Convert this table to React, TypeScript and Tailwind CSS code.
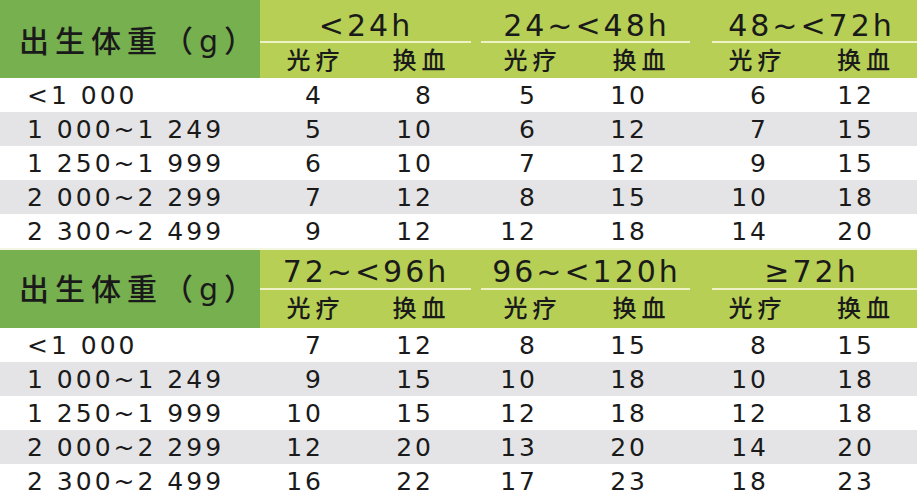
import React from "react";

const font = {
  fontFamily: '"DejaVu Sans", "Noto Sans CJK SC", sans-serif',
};

// right padding for each value column so digits line up on the right
const valuePad = ["pr-[42px]", "pr-[38px]", "pr-[50px]", "pr-[42px]", "pr-[51px]", "pr-[42px]"];
const subPad = ["pl-[5px]", "pl-[5px]", "pl-[5px]", "pl-[5px]", "pl-[5px]", "pl-[5px] pr-[10px]"];

const weights = ["<1 000", "1 000~1 249", "1 250~1 999", "2 000~2 299", "2 300~2 499"];

const tables = [
  {
    groups: ["<24h", "24~<48h", "48~<72h"],
    rows: [
      [4, 8, 5, 10, 6, 12],
      [5, 10, 6, 12, 7, 15],
      [6, 10, 7, 12, 9, 15],
      [7, 12, 8, 15, 10, 18],
      [9, 12, 12, 18, 14, 20],
    ],
    titleH: "h-[41px] pb-0",
    subH: "h-[35px]",
    labelPad: "pt-[5px]",
  },
  {
    groups: ["72~<96h", "96~<120h", "\u226572h"],
    rows: [
      [7, 12, 8, 15, 8, 15],
      [9, 15, 10, 18, 10, 18],
      [10, 15, 12, 18, 12, 18],
      [12, 20, 13, 20, 14, 20],
      [16, 22, 17, 23, 18, 23],
    ],
    titleH: "h-[38px] pb-[1px]",
    subH: "h-[38px]",
    labelPad: "pt-[2px]",
  },
];

// per group: title offset and underline margins
const groupStyle = [
  { title: "pl-[0px]", line: "mr-[1px]" },
  { title: "pl-[11px]", line: "ml-[9px] -mr-[1px]" },
  { title: "pl-[16px]", line: "ml-[22px]" },
];

function Table({ t }: { t: (typeof tables)[number] }) {
  return (
    <div className="grid grid-cols-[260px_106px_106px_116px_102px_130px_97px] text-[#1a1a1a] font-medium">
      {/* header */}
      <div
        className={`row-span-3 bg-[#77b04f] flex items-center pl-[19px] text-[30px] tracking-[6px] leading-none ${t.labelPad}`}
      >
        出生体重（g）
      </div>
      {t.groups.map((g, i) => (
        <div key={g} className="col-span-2 bg-[#b7cf55] flex flex-col">
          <div
            className={`${t.titleH} flex items-end justify-center text-[30px] tracking-[3px] leading-none ${groupStyle[i].title}`}
          >
            {g}
          </div>
        </div>
      ))}
      {t.groups.map((g, i) => (
        <div key={g + "l"} className="col-span-2 bg-[#b7cf55] h-[2px]">
          <div className={`h-[2px] bg-[#eef2c6] ${groupStyle[i].line}`} />
        </div>
      ))}
      {[0, 1, 2, 3, 4, 5].map((c) => (
        <div
          key={c}
          className={`${t.subH} bg-[#b7cf55] flex items-center justify-center text-[24px] tracking-[5px] leading-none ${subPad[c]}`}
        >
          {c % 2 === 0 ? "光疗" : "换血"}
        </div>
      ))}

      {/* body */}
      {t.rows.map((r, ri) => {
        const bg = ri % 2 === 1 ? "bg-[#e4e4e6]" : "bg-white";
        return (
          <React.Fragment key={ri}>
            <div
              className={`h-[34px] ${bg} flex items-center pl-[27px] text-[25px] tracking-[3px] leading-none`}
            >
              {weights[ri]}
            </div>
            {r.map((v, ci) => (
              <div
                key={ci}
                className={`h-[34px] ${bg} flex items-center justify-end text-[25px] tracking-[3px] leading-none ${valuePad[ci]}`}
              >
                {v}
              </div>
            ))}
          </React.Fragment>
        );
      })}
    </div>
  );
}

export default function App() {
  return (
    <div className="w-[917px] h-[500px] bg-white overflow-hidden" style={font}>
      <Table t={tables[0]} />
      <div className="h-[2px] bg-[#f4f6e4]" />
      <Table t={tables[1]} />
    </div>
  );
}
